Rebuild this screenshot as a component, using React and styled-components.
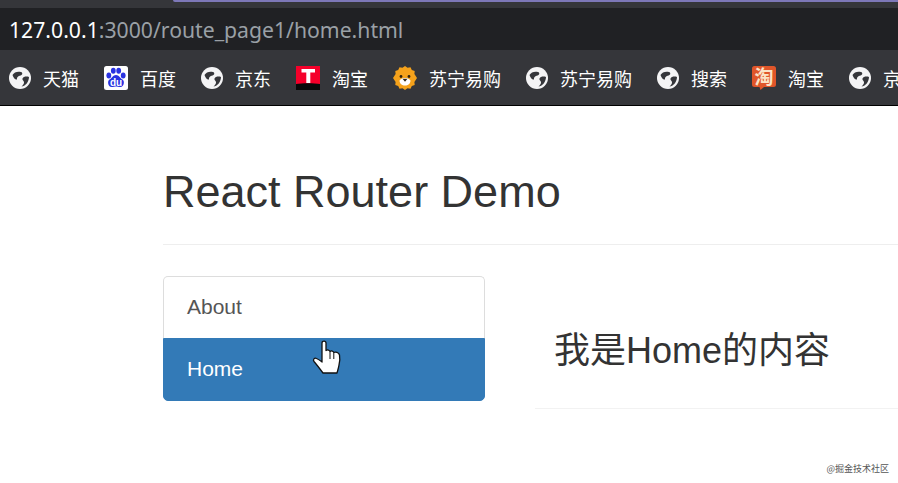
import React from 'react';
import styled, { createGlobalStyle } from 'styled-components';

const GlobalStyle = createGlobalStyle`
  html, body {
    margin: 0;
    padding: 0;
    background: #fff;
    overflow: hidden;
  }
  * {
    box-sizing: border-box;
  }
`;

const Page = styled.div`
  position: relative;
  width: 898px;
  height: 483px;
  overflow: hidden;
  font-family: "Liberation Sans", "Noto Sans CJK SC", sans-serif;
  color: #333;
`;

const TabStrip = styled.div`
  height: 8px;
  background: #35363a;
  padding-left: 173px;
`;

const ActiveTab = styled.div`
  height: 2px;
  background: #7d78b8;
  border-bottom-left-radius: 2px;
`;

const AddressBar = styled.div`
  height: 42px;
  background: #202124;
  padding-left: 9px;
  display: flex;
  align-items: center;
  font-family: "Noto Sans", "Open Sans", sans-serif;
  font-size: 21.2px;
  color: #9aa0a6;
  white-space: nowrap;
`;

const Host = styled.span`
  color: #fff;
`;

const BookmarkBar = styled.div`
  height: 56px;
  background: #35363a;
  border-bottom: 1px solid #000;
  padding-left: 9px;
  display: flex;
  align-items: center;
  gap: 25px;
  overflow: hidden;
`;

const Bookmark = styled.div`
  display: flex;
  align-items: center;
  gap: 12px;
  flex-shrink: 0;
  color: #fff;
  font-family: "Noto Sans CJK SC", sans-serif;
  font-size: 18px;
  line-height: 24px;
`;

const Content = styled.main`
  padding: 60px 0 0 163px;
`;

const Title = styled.h1`
  margin: 0;
  padding-bottom: 26px;
  border-bottom: 1px solid #eee;
  font-size: 45px;
  line-height: 52px;
  font-weight: 400;
  color: #333;
`;

const Columns = styled.div`
  display: flex;
  margin-top: 31px;
`;

const Nav = styled.nav`
  width: 322px;
  height: 125px;
  flex-shrink: 0;
  display: flex;
  flex-direction: column;
`;

const NavItem = styled.a`
  flex: 1;
  display: flex;
  align-items: center;
  padding: 0 0 2px 23px;
  font-size: 21px;
  color: ${(props) => (props.$active ? '#fff' : '#555')};
  background: ${(props) => (props.$active ? '#337ab7' : '#fff')};
  border: 1px solid ${(props) => (props.$active ? '#337ab7' : '#ddd')};
  border-radius: ${(props) => (props.$active ? '0 0 5px 5px' : '5px 5px 0 0')};
  border-bottom: ${(props) => (props.$active ? '' : 'none')};
`;

const Panel = styled.section`
  flex: 1;
  margin-left: 50px;
`;

const PanelHeading = styled.h2`
  margin: 0;
  padding: 51px 0 33px 19px;
  border-bottom: 1px solid #f2f2f2;
  font-size: 36px;
  line-height: 48px;
  font-weight: 400;
  color: #333;
`;

const Cursor = styled.svg`
  position: absolute;
  left: 312px;
  top: 338px;
`;

const Watermark = styled.span`
  position: absolute;
  right: 9px;
  top: 463px;
  font-family: "Noto Sans CJK SC", sans-serif;
  font-size: 9px;
  line-height: 12px;
  color: #555;
`;

const GlobeIcon = () => (
  <svg width="22" height="22" viewBox="0 0 22 22">
    <circle cx="11" cy="11" r="11" fill="#f4f4f5" />
    <path d="M3.500 8C5 5 9 4 12 5c2 .8 1.500 3-.5 3.500-2.500.5-4 2-3.500 4-2 .5-3.500-2-4.500-4.500z" fill="#35363a" />
    <path d="M20 10c-2.500-1-5.500-.5-6.500 1.500-.5 1.500 1 2 1.500 3.500.3 1.500-1 3-2.500 4.500 3.500 0 7.500-4.500 7.500-9.500z" fill="#35363a" />
  </svg>
);

const BaiduIcon = () => (
  <svg width="24" height="24" viewBox="0 0 24 24">
    <rect width="24" height="24" rx="2.5" fill="#fff" />
    <g fill="#2932e1">
      <ellipse cx="4.800" cy="9.500" rx="2.400" ry="3" />
      <ellipse cx="9.300" cy="4.800" rx="2.400" ry="3" />
      <ellipse cx="14.700" cy="4.800" rx="2.400" ry="3" />
      <ellipse cx="19.200" cy="9.500" rx="2.400" ry="3" />
      <path d="M12 9c3 0 4 3 6.500 4.500s1.500 7.500-2 7.500c-2 0-3.500-.6-4.500-.6s-2.500.6-4.500.6c-3.500 0-4.500-6-2-7.500S9 9 12 9z" />
    </g>
    <text x="12" y="19.500" textAnchor="middle" fontSize="10" fontWeight="700" fontFamily="Liberation Sans, sans-serif" fill="#fff">du</text>
  </svg>
);

const TmallIcon = () => (
  <svg width="24" height="24" viewBox="0 0 24 24">
    <rect width="24" height="18" fill="#f5002a" />
    <rect y="18" width="24" height="6" fill="#0a0a0a" />
    <path d="M0 18c6-1 18-1 24 0v2H0z" fill="#0a0a0a" />
    <path d="M5.500 3h13.500v3.500h-4.700V17h-4V6.500H5.500z" fill="#fff" />
  </svg>
);

const LionIcon = () => (
  <svg width="24" height="24" viewBox="0 0 24 24">
    <path d="M12 0l2.500 1.800 3-.6 1.300 2.800 2.900 1-.3 3.100L24 12l-2.600 3.900.3 3.100-2.900 1-1.300 2.800-3-.6L12 24l-2.500-1.800-3 .6L5.200 20l-2.900-1 .3-3.100L0 12l2.600-3.900-.3-3.100 2.900-1 1.300-2.800 3 .6z" fill="#f5a21b" />
    <circle cx="8" cy="10.500" r="1.400" fill="#33240f" />
    <circle cx="16" cy="10.500" r="1.400" fill="#33240f" />
    <path d="M6.500 14.500c1.500-2 3.500-2.500 5.500-2.500s4 .5 5.500 2.500c0 3-2.500 5-5.500 5s-5.500-2-5.500-5z" fill="#fff" />
    <path d="M9.500 12.800h5L12 15.800z" fill="#33240f" />
  </svg>
);

const TaobaoIcon = () => (
  <svg width="24" height="24" viewBox="0 0 24 24">
    <path d="M2.500 0h19A2.500 2.500 0 0 1 24 2.500v16a2.500 2.500 0 0 1-2.500 2.500H12l-3.500 3-1-3H2.500A2.500 2.500 0 0 1 0 18.500v-16A2.500 2.500 0 0 1 2.500 0z" fill="#e0562a" />
    <text x="12" y="17.500" textAnchor="middle" fontSize="19" fontWeight="700" fontFamily="Noto Sans CJK SC, sans-serif" fill="#fbe3c8">淘</text>
  </svg>
);

const bookmarks = [
  { label: '天猫', icon: GlobeIcon },
  { label: '百度', icon: BaiduIcon },
  { label: '京东', icon: GlobeIcon },
  { label: '淘宝', icon: TmallIcon },
  { label: '苏宁易购', icon: LionIcon },
  { label: '苏宁易购', icon: GlobeIcon },
  { label: '搜索', icon: GlobeIcon },
  { label: '淘宝', icon: TaobaoIcon },
  { label: '京东', icon: GlobeIcon },
];

function App() {
  return (
    <Page>
      <GlobalStyle />
      <TabStrip>
        <ActiveTab />
      </TabStrip>
      <AddressBar>
        <Host>127.0.0.1</Host>:3000/route_page1/home.html
      </AddressBar>
      <BookmarkBar>
        {bookmarks.map(({ label, icon: Icon }, i) => (
          <Bookmark key={i}>
            <Icon />
            {label}
          </Bookmark>
        ))}
      </BookmarkBar>
      <Content>
        <Title>React Router Demo</Title>
        <Columns>
          <Nav>
            <NavItem>About</NavItem>
            <NavItem $active>Home</NavItem>
          </Nav>
          <Panel>
            <PanelHeading>我是Home的内容</PanelHeading>
          </Panel>
        </Columns>
      </Content>
      <Cursor width="30" height="38" viewBox="0 0 30 38">
        <path
          d="M10 5c0-2.500 4-2.500 4 0v7.500c1.500-1 3.500-.5 4 1 1.300-1 3.300-.5 3.800 1 1.500-.8 5-.5 5.700 2.500.5 3 .3 7-.5 10-.5 3-1.200 5-2 8H11c-3-4-6-8-9-11.500-1.500-2 .5-4 2.500-3 2 .8 3.500 2 5.500 3.500z"
          fill="#fff"
          stroke="#111"
          strokeWidth="1.300"
          strokeLinejoin="round"
        />
        <path d="M18 14v7M21.800 15v6" stroke="#111" strokeWidth="1" fill="none" />
      </Cursor>
      <Watermark>@掘金技术社区</Watermark>
    </Page>
  );
}

export default App;
